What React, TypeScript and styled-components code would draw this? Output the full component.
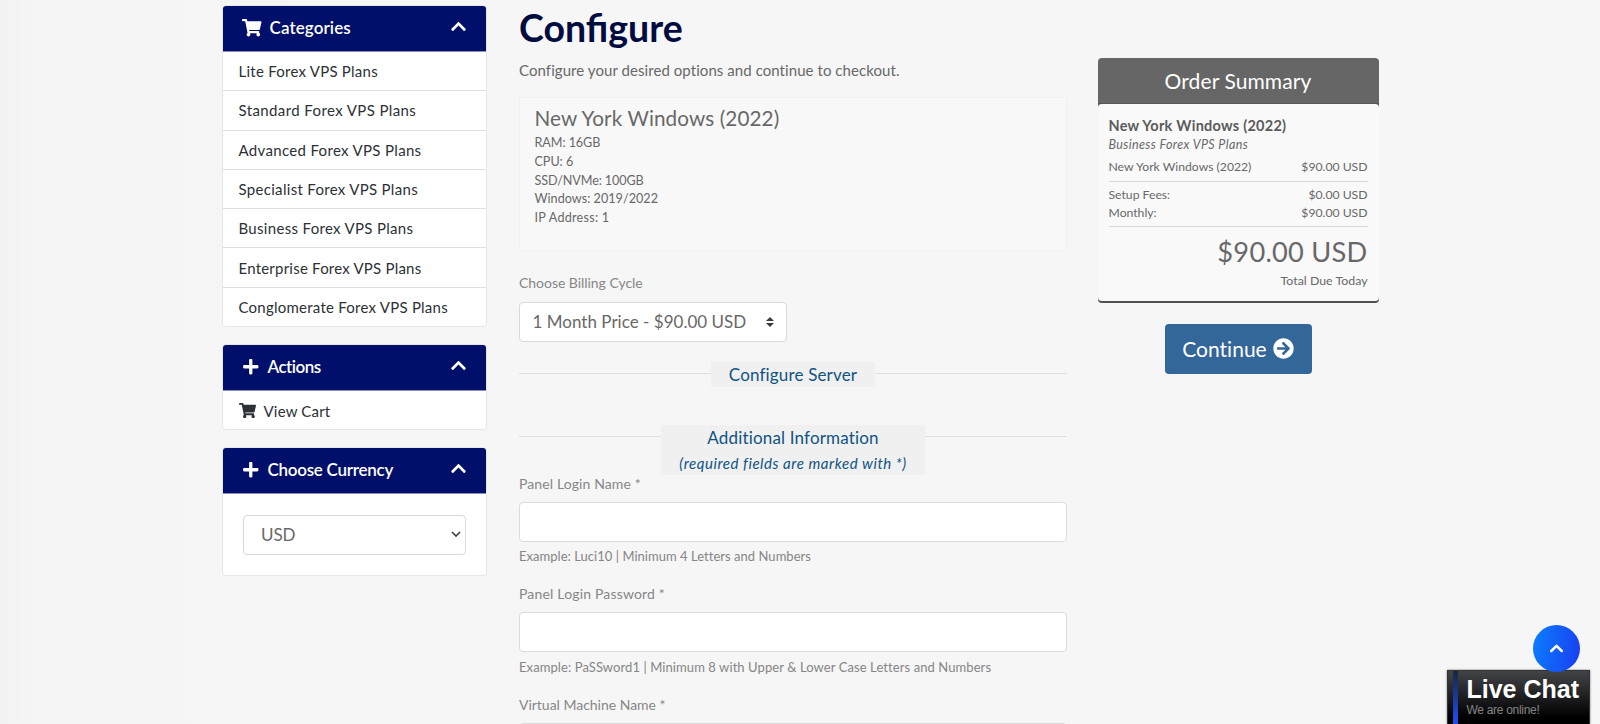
import React from "react";
import styled, { createGlobalStyle } from "styled-components";
import { FaShoppingCart, FaPlus, FaChevronUp, FaArrowCircleRight } from "react-icons/fa";

const GlobalStyle = createGlobalStyle`
  * { box-sizing: border-box; }
  body {
    margin: 0;
    height: 724px;
    overflow: hidden;
    background: linear-gradient(90deg, #f2f2f2 0, #f5f5f5 36px, #f6f6f6 300px);
    font-family: Lato, "Liberation Sans", sans-serif;
    color: #686868;
  }
  h1, h2, h3, p { margin: 0; font-weight: 400; }
`;

/* Letter spacing, set per label. */
type Tracked = { $ls?: number };
const tracking = ({ $ls = 0 }: Tracked) => `letter-spacing: ${$ls}px;`;

const Page = styled.div`
  display: grid;
  grid-template-columns: 265px 548px 281px;
  justify-content: start;
  column-gap: 32px;
  padding-left: 222px;
  height: 724px;
  overflow: hidden;
  position: relative;
  white-space: nowrap;
`;

const Sidebar = styled.aside`
  display: flex;
  flex-direction: column;
  gap: 17px;
  padding-top: 5px;
`;

const Panel = styled.section<{ $height: number }>`
  height: ${({ $height }) => $height}px;
  background: #fff;
  border: 1px solid #e6e6e6;
  border-radius: 4px;
  overflow: hidden;
`;

const PanelHeader = styled.header`
  display: flex;
  align-items: center;
  height: 47px;
  margin: -1px -1px 0;
  padding: 0 20px;
  background: #000f69;
  border-bottom: 1px solid #8a8fb8;
  color: #fff;
`;

const PanelTitle = styled.h3<Tracked>`
  flex: 1;
  margin-left: 8px;
  font-size: 17px;
  font-weight: 600;
  line-height: 22px;
  ${tracking}
`;

const Collapse = styled(FaChevronUp)`
  margin-bottom: 3px;
`;

const PanelRow = styled.a<Tracked>`
  display: flex;
  align-items: center;
  gap: 8px;
  height: 39.3px;
  padding-left: 15.5px;
  border-bottom: 1px solid #dfdfdf;
  font-size: 15px;
  color: #2c3136;
  ${tracking}
  &:last-child { border-bottom: 0; }
`;

const PanelBody = styled.div`
  padding: 20.5px 20px;
`;

const SelectBox = styled.div<Tracked & { $width: number; $inset: number; $end: number }>`
  display: flex;
  align-items: center;
  justify-content: space-between;
  width: ${({ $width }) => $width}px;
  height: 40px;
  padding: 0 ${({ $end }) => $end}px 0 ${({ $inset }) => $inset}px;
  background: #fff;
  border: 1px solid #d9d9d9;
  border-radius: 4px;
  font-size: 17px;
  color: #686868;
  ${tracking}
`;

const Main = styled.main`
  padding-top: 6px;
`;

const Heading = styled.h1`
  font-size: 37.5px;
  font-weight: 700;
  line-height: 44px;
  letter-spacing: 0;
  color: #000b3f;
`;

const Intro = styled.p`
  margin-top: 7.5px;
  font-size: 15px;
  line-height: 24px;
  letter-spacing: 0.065px;
`;

const ProductInfo = styled.section`
  height: 154px;
  margin-top: 15.5px;
  padding: 8px 15px 8px 14.5px;
  background: #f8f8f8;
  border: 1px solid #f1f1f1;
`;

const ProductName = styled.h2`
  font-size: 20.7px;
  line-height: 25px;
  letter-spacing: 0.1px;
`;

const Specs = styled.div`
  margin-top: 3.4px;
`;

const Spec = styled.p<Tracked>`
  font-size: 12.6px;
  line-height: 18.6px;
  ${tracking}
`;

const FieldLabel = styled.label<Tracked>`
  display: block;
  font-size: 14px;
  line-height: 20px;
  color: #868686;
  ${tracking}
`;

const BillingCycle = styled.div`
  display: flex;
  flex-direction: column;
  gap: 8.5px;
  margin-top: 22px;
`;

const Divider = styled.div<{ $top: number }>`
  display: flex;
  align-items: flex-start;
  margin-top: ${({ $top }) => $top}px;
  &::before, &::after {
    content: "";
    flex: 1;
    height: 1px;
    margin-top: 11px;
    background: #dfdfdf;
  }
`;

const DividerLabel = styled.div<{ $width: number; $height: number }>`
  width: ${({ $width }) => $width}px;
  height: ${({ $height }) => $height}px;
  background: #f0f0f0;
  text-align: center;
  color: #0f5384;
`;

const DividerTitle = styled.p<Tracked>`
  font-size: 17px;
  line-height: 25px;
  ${tracking}
`;

const DividerNote = styled.p`
  font-size: 15px;
  font-style: italic;
  line-height: 26px;
  letter-spacing: 0.54px;
`;

const AdditionalFields = styled.div`
  margin-top: -1px;
`;

const Field = styled.div`
  display: flex;
  flex-direction: column;
  height: 110.4px;
`;

const Input = styled.input`
  height: 39.6px;
  margin: 8px 0 4.7px;
  padding: 0 12px;
  flex-shrink: 0;
  background: #fff;
  border: 1px solid #dcdcdc;
  border-radius: 4px;
  font: inherit;
`;

const Hint = styled.p<Tracked>`
  font-size: 13px;
  line-height: 20px;
  color: #858585;
  ${tracking}
`;

const Checkout = styled.aside`
  display: flex;
  flex-direction: column;
  align-items: center;
  padding-top: 58px;
  margin-left: -3px;
`;

const Summary = styled.section`
  width: 281px;
  height: 245px;
  background: #666;
  border-bottom: 2px solid #4f4f4f;
  border-radius: 4px;
`;

const SummaryTitle = styled.h2`
  height: 46px;
  border-bottom: 1px solid #555;
  color: #fff;
  font-size: 21px;
  line-height: 46px;
  letter-spacing: 0.1px;
  text-align: center;
`;

const SummaryBody = styled.div`
  height: 197px;
  padding: 11.5px 11px 0;
  background: #f9f9f9;
  border-radius: 4px;
`;

const SummaryProduct = styled.p`
  font-size: 14.5px;
  font-weight: 700;
  line-height: 20px;
  letter-spacing: 0.25px;
  color: #5b5b5b;
`;

const SummaryGroup = styled.p`
  font-size: 12.5px;
  font-style: italic;
  line-height: 17px;
  letter-spacing: 0.39px;
`;

const SummaryLines = styled.div<{ $top: number; $bottom: number }>`
  padding: ${({ $top, $bottom }) => `${$top}px 0 ${$bottom}px`};
  border-bottom: 1px solid #d9d9d9;
`;

const SummaryLine = styled.div`
  display: flex;
  justify-content: space-between;
  font-size: 12.2px;
  line-height: 17.6px;
`;

const Total = styled.p`
  margin-top: 8px;
  font-size: 27.2px;
  line-height: 34px;
  letter-spacing: 0.25px;
  text-align: right;
`;

const TotalCaption = styled.p`
  margin-top: 2px;
  font-size: 12.36px;
  line-height: 19px;
  text-align: right;
`;

const ContinueButton = styled.button`
  display: flex;
  align-items: center;
  justify-content: center;
  gap: 6px;
  width: 147px;
  height: 50px;
  margin-top: 21px;
  padding: 0 0 1px;
  background: #336699;
  border: 0;
  border-radius: 4px;
  color: #fff;
  font-family: inherit;
  font-size: 21px;
  font-variant-ligatures: none;
`;

const ScrollTop = styled.button`
  position: absolute;
  z-index: 2;
  left: 1532.5px;
  top: 625px;
  width: 47px;
  height: 47px;
  display: flex;
  align-items: center;
  justify-content: center;
  padding: 0 0 2px;
  border: 0;
  border-radius: 50%;
  background: linear-gradient(100deg, #0a80ff, #1a3cf0);
`;

const LiveChat = styled.div`
  position: absolute;
  left: 1447px;
  top: 670px;
  width: 143px;
  height: 54px;
  padding: 4px 0 0 18.5px;
  overflow: hidden;
  border: 1px solid #333;
  border-bottom: 0;
  box-shadow: 0 0 2px #777;
  background:
    linear-gradient(#1a2540, #1b50f5) 5px 0 / 5px 100% no-repeat,
    linear-gradient(#424448, #000 88%);
  font-family: "Liberation Sans", Arial, sans-serif;
`;

const ChatTitle = styled.p`
  font-size: 25px;
  font-weight: 700;
  line-height: 28px;
  color: #fff;
`;

const ChatStatus = styled.p`
  font-size: 12px;
  line-height: 14px;
  letter-spacing: -0.3px;
  color: #858585;
`;

const plans: [string, number][] = [
  ["Lite Forex VPS Plans", 0.25],
  ["Standard Forex VPS Plans", 0.39],
  ["Advanced Forex VPS Plans", 0.33],
  ["Specialist Forex VPS Plans", 0.31],
  ["Business Forex VPS Plans", 0.32],
  ["Enterprise Forex VPS Plans", 0.22],
  ["Conglomerate Forex VPS Plans", 0.24],
];

const specs: [string, number][] = [
  ["RAM: 16GB", -0.07],
  ["CPU: 6", -0.04],
  ["SSD/NVMe: 100GB", -0.11],
  ["Windows: 2019/2022", 0.03],
  ["IP Address: 1", 0.25],
];

const fields = [
  { label: "Panel Login Name *", ls: 0.11, hint: "Example: Luci10 | Minimum 4 Letters and Numbers", hintLs: 0.032 },
  { label: "Panel Login Password *", ls: 0.175, hint: "Example: PaSSword1 | Minimum 8 with Upper & Lower Case Letters and Numbers", hintLs: 0.085 },
  { label: "Virtual Machine Name *", ls: -0.02, hint: "", hintLs: 0 },
];

const SelectChevron = () => (
  <svg width="10" height="7" viewBox="0 0 10 7" fill="none" stroke="#444" strokeWidth="1.7">
    <path d="M1 1l4 4 4-4" />
  </svg>
);

const SelectArrows = () => (
  <svg width="8" height="10" viewBox="0 0 4 5" fill="#343a40">
    <path d="M2 0L0 2h4zm0 5L0 3h4z" />
  </svg>
);

const UpArrow = () => (
  <svg width="15" height="10" viewBox="0 0 15 10" fill="none" stroke="#fff" strokeWidth="2.5" strokeLinecap="round" strokeLinejoin="round">
    <path d="M2.2 8l5.3-5.2L12.8 8" />
  </svg>
);

export default function App() {
  return (
    <Page>
      <GlobalStyle />
      <Sidebar>
        <Panel $height={322}>
          <PanelHeader>
            <FaShoppingCart size={19.5} />
            <PanelTitle $ls={0.1}>Categories</PanelTitle>
            <Collapse size={17} />
          </PanelHeader>
          {plans.map(([name, ls]) => (
            <PanelRow key={name} $ls={ls}>{name}</PanelRow>
          ))}
        </Panel>
        <Panel $height={86}>
          <PanelHeader>
            <FaPlus size={17.5} />
            <PanelTitle $ls={-0.5}>Actions</PanelTitle>
            <Collapse size={17} />
          </PanelHeader>
          <PanelRow $ls={0.19}>
            <FaShoppingCart size={17} />
            View Cart
          </PanelRow>
        </Panel>
        <Panel $height={129}>
          <PanelHeader>
            <FaPlus size={17.5} />
            <PanelTitle $ls={-0.26}>Choose Currency</PanelTitle>
            <Collapse size={17} />
          </PanelHeader>
          <PanelBody>
            <SelectBox $width={223} $inset={17} $end={4} $ls={-0.1}>
              USD
              <SelectChevron />
            </SelectBox>
          </PanelBody>
        </Panel>
      </Sidebar>

      <Main>
        <Heading>Configure</Heading>
        <Intro>Configure your desired options and continue to checkout.</Intro>
        <ProductInfo>
          <ProductName>New York Windows (2022)</ProductName>
          <Specs>
            {specs.map(([text, ls]) => (
              <Spec key={text} $ls={ls}>{text}</Spec>
            ))}
          </Specs>
        </ProductInfo>
        <BillingCycle>
          <FieldLabel $ls={-0.04}>Choose Billing Cycle</FieldLabel>
          <SelectBox $width={268} $inset={12.5} $end={12} $ls={0.02}>
            1 Month Price - $90.00 USD
            <SelectArrows />
          </SelectBox>
        </BillingCycle>
        <Divider $top={20.5}>
          <DividerLabel $width={164} $height={25}>
            <DividerTitle $ls={0.161}>Configure Server</DividerTitle>
          </DividerLabel>
        </Divider>
        <Divider $top={38}>
          <DividerLabel $width={264} $height={50}>
            <DividerTitle $ls={0.17}>Additional Information</DividerTitle>
            <DividerNote>(required fields are marked with *)</DividerNote>
          </DividerLabel>
        </Divider>
        <AdditionalFields>
          {fields.map((field) => (
            <Field key={field.label}>
              <FieldLabel $ls={field.ls}>{field.label}</FieldLabel>
              <Input />
              <Hint $ls={field.hintLs}>{field.hint}</Hint>
            </Field>
          ))}
        </AdditionalFields>
      </Main>

      <Checkout>
        <Summary>
          <SummaryTitle>Order Summary</SummaryTitle>
          <SummaryBody>
            <SummaryProduct>New York Windows (2022)</SummaryProduct>
            <SummaryGroup>Business Forex VPS Plans</SummaryGroup>
            <SummaryLines $top={5} $bottom={6}>
              <SummaryLine><span>New York Windows (2022)</span><span>$90.00 USD</span></SummaryLine>
            </SummaryLines>
            <SummaryLines $top={4} $bottom={5}>
              <SummaryLine><span>Setup Fees:</span><span>$0.00 USD</span></SummaryLine>
              <SummaryLine><span>Monthly:</span><span>$90.00 USD</span></SummaryLine>
            </SummaryLines>
            <Total>$90.00 USD</Total>
            <TotalCaption>Total Due Today</TotalCaption>
          </SummaryBody>
        </Summary>
        <ContinueButton>
          Continue
          <FaArrowCircleRight size={21} />
        </ContinueButton>
      </Checkout>

      <ScrollTop aria-label="Back to top"><UpArrow /></ScrollTop>
      <LiveChat>
        <ChatTitle>Live Chat</ChatTitle>
        <ChatStatus>We are online!</ChatStatus>
      </LiveChat>
    </Page>
  );
}
